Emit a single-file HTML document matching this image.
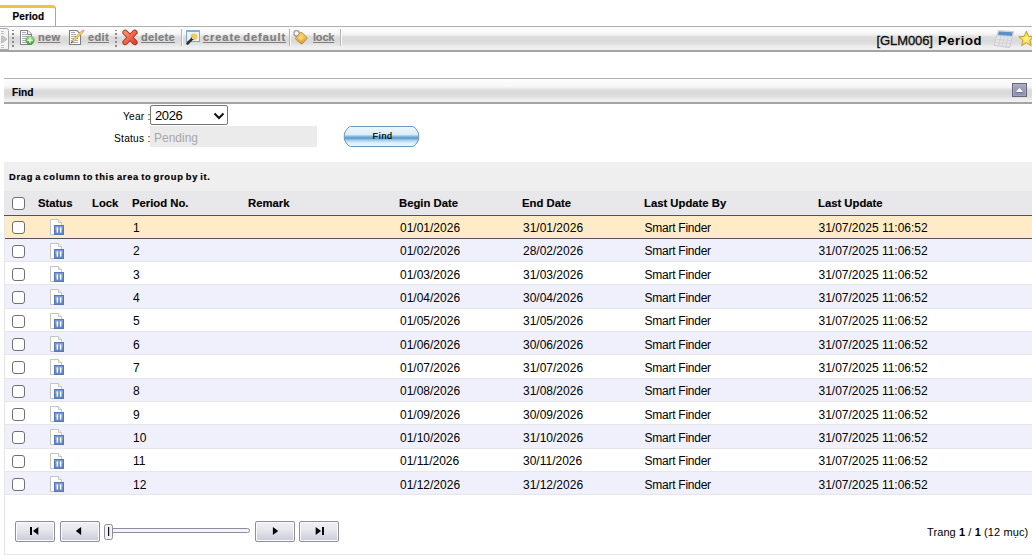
<!DOCTYPE html>
<html><head><meta charset="utf-8">
<style>
*{margin:0;padding:0;box-sizing:border-box}
html,body{width:1032px;height:559px;overflow:hidden;background:#fff;font-family:"Liberation Sans",sans-serif;color:#000;position:relative}
.a{position:absolute;white-space:nowrap}
.tab{left:0;top:5px;width:56px;height:22px;border-top:3px solid #f4be4c;border-right:1px solid #a4a8ac;border-top-right-radius:4px;background:#fff}
.tb{left:0;top:26px;width:1032px;height:26px;border-top:1px solid #b0b0b0;border-bottom:2px solid #a4a4a4;background:linear-gradient(#fdfdfd 0px,#f8f8f8 6px,#eeeeee 8px,#dcdcdc 10px,#dadada 14px,#e0e0e0 17px,#ececec 19px,#f2f2f2 23px)}
.lnk{font-size:11px;font-weight:bold;color:#7e7e7e;-webkit-text-stroke:0.2px #7e7e7e;text-decoration:underline;text-decoration-thickness:1px;text-underline-offset:1px}
.hdr{left:4px;top:78px;width:1028px;height:26px;border-top:1px solid #b0b0b0;border-bottom:2px solid #a4a4a4;background:linear-gradient(#fdfdfd 0px,#f8f8f8 7px,#eeeeee 9px,#dcdcdc 11px,#dadada 15px,#e0e0e0 18px,#ececec 20px,#f2f2f2 23px)}
.grp{left:4px;top:162px;width:1028px;height:29px;background:#efefef}
.gh{left:4px;top:191px;width:1028px;height:25px;background:#e8e8ea;border-bottom:1px solid #555060}
.gh:after{content:"";position:absolute;left:0;right:0;bottom:0;height:1px;background:#eaeaf6}
.row{position:absolute;left:4px;width:1028px;background:#fff;border-bottom:1px solid #e6e6e6}
.row.alt{background:#f0f0fc}
.row.sel{background:#ffecc6;border-bottom:1px solid #555060}
.cb{position:absolute;left:8px;width:13px;height:13px;border:1px solid #707070;border-radius:3px;background:#fff}
.c{position:absolute;font-size:12px;white-space:nowrap;top:5px}
.hl{position:absolute;font-size:11.3px;font-weight:bold;white-space:nowrap;top:6px;-webkit-text-stroke:0.15px #000}
.pb{position:absolute;top:521px;height:21px;border:1px solid #8e8e98;border-radius:2px;box-shadow:inset 0 0 0 1px #fafafc;background:linear-gradient(#f2f2f6,#e4e4ec 45%,#cbcbd9)}
</style></head><body>

<div class="a tab"></div>
<div class="a" style="left:12.5px;top:10.5px;font-size:10px;font-weight:bold;letter-spacing:0.1px;-webkit-text-stroke:0.2px #000">Period</div>

<div class="a tb"></div>
<svg class="a" style="left:0;top:0" width="1032" height="56" viewBox="0 0 1032 56">
 <defs>
  <linearGradient id="gg" x1="0" y1="0" x2="0" y2="1"><stop offset="0" stop-color="#b4e6a0"/><stop offset="0.5" stop-color="#6cc054"/><stop offset="1" stop-color="#3e9a30"/></linearGradient>
  <linearGradient id="lk" x1="0" y1="0" x2="1" y2="1"><stop offset="0" stop-color="#f6dc78"/><stop offset="1" stop-color="#d49a30"/></linearGradient>
  <radialGradient id="stg" cx="0.5" cy="0.55" r="0.6"><stop offset="0" stop-color="#fff6a0"/><stop offset="0.6" stop-color="#f6d838"/><stop offset="1" stop-color="#e8b820"/></radialGradient>
  <linearGradient id="xg" x1="0" y1="0" x2="1" y2="1"><stop offset="0" stop-color="#ff8a6a"/><stop offset="1" stop-color="#e8402a"/></linearGradient>
  <linearGradient id="calc" x1="0" y1="0" x2="0" y2="1"><stop offset="0" stop-color="#f2f2f2"/><stop offset="1" stop-color="#c8c8cc"/></linearGradient>
 </defs>
 <!-- handle -->
 <path d="M0 28.5 H6.5 Q8.5 28.5 8.5 30.5 V49.5 H0" fill="#f4f4f4" stroke="#a8a8a8" stroke-width="1"/>
 <g fill="#c0c0c0"><rect x="1" y="31" width="3" height="1"/><rect x="1" y="33" width="3" height="1"/><rect x="1" y="45" width="3" height="1"/><rect x="1" y="47" width="3" height="1"/><rect x="1" y="36" width="1" height="7"/></g>
 <path d="M2.5 35.5 L7 39.3 L2.5 43 Z" fill="#c4c4c4" stroke="#b0b0b0" stroke-width="0.6"/>
 <!-- dots -->
 <g fill="#8a8a8a"><rect x="12" y="30" width="2" height="1"/><rect x="12" y="33" width="2" height="2"/><rect x="12" y="37" width="2" height="2"/><rect x="12" y="41" width="2" height="2"/><rect x="12" y="45" width="2" height="2"/></g>
 <g fill="#8a8a8a"><rect x="115" y="30" width="2" height="1"/><rect x="115" y="33" width="2" height="2"/><rect x="115" y="37" width="2" height="2"/><rect x="115" y="41" width="2" height="2"/><rect x="115" y="45" width="2" height="2"/></g>
 <!-- new icon -->
 <path d="M20.5 30.5 H28 L31.5 34 V44.5 H20.5 Z" fill="#fff" stroke="#7e7e86" stroke-width="1"/>
 <path d="M27.5 30.5 V34.5 H31.5" fill="#f4f4f4" stroke="#7e7e86" stroke-width="1"/>
 <g fill="#a8aab8"><rect x="22" y="32" width="4" height="1"/><rect x="22" y="34" width="5" height="1"/><rect x="22" y="36" width="7" height="1"/><rect x="22" y="38" width="7" height="1"/><rect x="22" y="40" width="7" height="1"/><rect x="22" y="42" width="7" height="1"/></g>
 <circle cx="30" cy="40.3" r="4.2" fill="url(#gg)" stroke="#4a9a3a" stroke-width="0.6"/>
 <path d="M30 37.6 V43 M27.3 40.3 H32.7" stroke="#e8f8e0" stroke-width="1.4"/>
 <!-- edit icon -->
 <path d="M69.5 30.5 H77 L80.5 34 V44.5 H69.5 Z" fill="#fff" stroke="#7e7e86" stroke-width="1.1"/>
 <g fill="#a8aab8"><rect x="71" y="32" width="4" height="1"/><rect x="71" y="34" width="5" height="1"/><rect x="71" y="36" width="7" height="1"/><rect x="71" y="38" width="7" height="1"/><rect x="71" y="40" width="7" height="1"/><rect x="71" y="42" width="7" height="1"/></g>
 <path d="M72.3 41.7 L82.6 31.4" stroke="#b89038" stroke-width="2.6" stroke-linecap="butt"/>
 <path d="M72.3 41.7 L82.6 31.4" stroke="#f4d868" stroke-width="1.5"/>
 <path d="M82.2 31.8 L84 30" stroke="#e8a898" stroke-width="2.2"/>
 <path d="M71 43 L72.6 41.4" stroke="#555" stroke-width="1.2"/>
 <!-- delete -->
 <path d="M125.2 32.4 L134.8 42.4 M134.8 32.4 L125.2 42.4" stroke="#9a3424" stroke-width="5.6" stroke-linecap="round"/>
 <path d="M125.2 32.4 L134.8 42.4 M134.8 32.4 L125.2 42.4" stroke="url(#xg)" stroke-width="3.8" stroke-linecap="round"/>
 <!-- separators -->
 <rect x="181" y="29" width="1" height="17" fill="#b4b4b4"/><rect x="182" y="29" width="1" height="17" fill="#fafafa"/>
 <rect x="289" y="29" width="1" height="17" fill="#b4b4b4"/><rect x="290" y="29" width="1" height="17" fill="#fafafa"/>
 <rect x="340" y="29" width="1" height="17" fill="#b4b4b4"/><rect x="341" y="29" width="1" height="17" fill="#fafafa"/>
 <!-- create default -->
 <rect x="186.5" y="30.5" width="13" height="11" fill="#eaf2fc" stroke="#7ea4d8" stroke-width="1"/>
 <rect x="186" y="30" width="14" height="2" fill="#86acdc"/>
 <circle cx="194" cy="36.8" r="3.4" fill="#f0d050"/>
 <path d="M187.5 43.5 L192.8 38.2" stroke="#2e2e2e" stroke-width="2.6" stroke-linecap="round"/>
 <circle cx="193" cy="38" r="1" fill="#fff"/>
 <!-- lock -->
 <circle cx="296.6" cy="33.4" r="2.7" fill="none" stroke="#9a9cb0" stroke-width="1.3"/>
 <rect x="296.8" y="33.7" width="9" height="9" rx="1.6" transform="rotate(42 301.3 38.2)" fill="url(#lk)" stroke="#c08a30" stroke-width="0.9"/>
 <rect x="299" y="36" width="4" height="4" transform="rotate(42 301 38)" fill="#f8e488" opacity="0.6"/>
 <!-- calculator -->
 <path d="M998.3 30.6 L1013.6 31.6 L1009.7 47.7 L994 45.3 Z" fill="#e4e4e8" stroke="#c4c4cc" stroke-width="0.8"/>
 <path d="M998.8 31.4 L1012.8 32.3 L1011.8 36 L998 35.2 Z" fill="#5e8ec4"/>
 <path d="M998 35.2 L1011.8 36 L1011.5 37 L997.8 36.2 Z" fill="#b4d6ee"/>
 <g stroke="#c8c8d0" stroke-width="0.7"><path d="M997.2 39.6 L1010.8 40.4 M996.3 42.6 L1010 43.4"/><path d="M1001 36.5 L998.5 46 M1004.5 36.7 L1002.2 46.5 M1008 36.9 L1005.9 47"/></g>
 <!-- star -->
 <path d="M1026.4 31 L1028.6 36.3 L1034 36.7 L1029.9 40.2 L1031.2 45.6 L1026.4 42.7 L1021.6 45.6 L1022.9 40.2 L1018.8 36.7 L1024.2 36.3 Z" fill="url(#stg)" stroke="#c09a28" stroke-width="0.9" stroke-linejoin="round"/>
</svg>
<div class="a lnk" style="left:38px;top:31px;letter-spacing:0.3px">new</div>
<div class="a lnk" style="left:88px;top:31px;letter-spacing:0.35px">edit</div>
<div class="a lnk" style="left:141px;top:31px;letter-spacing:0.37px">delete</div>
<div class="a lnk" style="left:203px;top:31px;letter-spacing:0.95px;word-spacing:-1.8px">create default</div>
<div class="a lnk" style="left:313px;top:31px;letter-spacing:-0.2px">lock</div>
<div class="a" style="left:876.5px;top:33px;font-size:13px;letter-spacing:-0.1px;color:#111;-webkit-text-stroke:0.35px #111">[GLM006]</div>
<div class="a" style="left:938px;top:33px;font-size:13px;font-weight:bold;letter-spacing:0.6px;color:#000">Period</div>

<div class="a hdr"></div>
<div class="a" style="left:12px;top:87px;font-size:10.2px;font-weight:bold;-webkit-text-stroke:0.15px #000">Find</div>
<svg class="a" style="left:1008px;top:80px" width="24" height="20" viewBox="1008 80 24 20">
 <defs><linearGradient id="cg" x1="0" y1="0" x2="0" y2="1"><stop offset="0" stop-color="#acacc4"/><stop offset="1" stop-color="#8a8aac"/></linearGradient></defs>
 <rect x="1012.5" y="83.5" width="14" height="13" fill="url(#cg)" stroke="#66667a"/>
 <rect x="1013.5" y="84.5" width="12" height="11" fill="none" stroke="#b2b2ca" stroke-width="0.8" opacity="0.7"/>
 <path d="M1015.9 92 L1019.5 88 L1023.1 92 Z" fill="#fff"/>
 <rect x="1016" y="92" width="7" height="1" fill="#74748e"/>
</svg>

<div class="a" style="left:123px;top:111px;font-size:10.2px;letter-spacing:0.2px">Year :</div>
<div class="a" style="left:150px;top:105px;width:78px;height:20px;border:1px solid #767676;border-radius:2px;background:#fff"></div>
<div class="a" style="left:155px;top:108px;font-size:13px;letter-spacing:-0.4px">2026</div>
<svg class="a" style="left:0;top:100px" width="430" height="52" viewBox="0 100 430 52">
 <defs><linearGradient id="fb" x1="0" y1="0" x2="0" y2="1"><stop offset="0" stop-color="#eef8fe"/><stop offset="0.4" stop-color="#dcedf8"/><stop offset="0.5" stop-color="#86b8dc"/><stop offset="0.58" stop-color="#5a98c6"/><stop offset="0.68" stop-color="#a4cce8"/><stop offset="0.82" stop-color="#def0fa"/><stop offset="1" stop-color="#eaf6fe"/></linearGradient></defs>
 <path d="M214.5 113.5 L219 118 L223.5 113.5" fill="none" stroke="#111" stroke-width="2"/>
 <path d="M350.5 126.5 L412.5 126.5 Q415 126.5 418.5 133 Q419 136.5 418.5 140 Q415 146.5 412.5 146.5 L350.5 146.5 Q348 146.5 344.5 140 Q344 136.5 344.5 133 Q348 126.5 350.5 126.5 Z" fill="url(#fb)" stroke="#6a98c0" stroke-width="1"/>
</svg>
<div class="a" style="left:372.5px;top:130.5px;font-size:9px;letter-spacing:0.7px;color:#000;-webkit-text-stroke:0.2px #000">Find</div>
<div class="a" style="left:114px;top:133px;font-size:10.2px;letter-spacing:0.25px">Status :</div>
<div class="a" style="left:150px;top:126px;width:167px;height:21px;background:#ebebeb"></div>
<div class="a" style="left:154px;top:131px;font-size:12px;color:#a8a8a8">Pending</div>

<div class="a grp"></div>
<div class="a" style="left:9px;top:171.5px;font-size:9.3px;font-weight:bold;letter-spacing:0.72px;word-spacing:-1.1px;-webkit-text-stroke:0.2px #000">Drag a column to this area to group by it.</div>
<div class="a gh"><div class="cb" style="top:6px"></div><div class="hl" style="left:34px">Status</div><div class="hl" style="left:88px">Lock</div><div class="hl" style="left:128px">Period No.</div><div class="hl" style="left:244px">Remark</div><div class="hl" style="left:395px">Begin Date</div><div class="hl" style="left:518px">End Date</div><div class="hl" style="left:640px">Last Update By</div><div class="hl" style="left:814px">Last Update</div></div>

<div class="row sel" style="top:216px;height:23px"><div class="cb" style="top:5px"></div><svg class="st" width="16" height="17" viewBox="0 0 16 17" style="position:absolute;left:46px;top:3px">
<path d="M0.5 0.5 H8.5 L11.5 3.5 V15.5 H0.5 Z" fill="#fff" stroke="#c4c4c4"/>
<path d="M8.5 0.5 V3.5 H11.5" fill="#f0f0f0" stroke="#c8c8c8"/>
<rect x="4" y="6" width="10" height="10" fill="#6688c8"/>
<rect x="5" y="7" width="8" height="4" fill="#7a9ad4"/>
<rect x="4.5" y="6.5" width="9" height="9" fill="none" stroke="#5478b8" stroke-width="1"/>
<rect x="6.6" y="8.4" width="1.5" height="5.2" fill="#fff"/><rect x="9.9" y="8.4" width="1.5" height="5.2" fill="#fff"/>
</svg><div class="c" style="left:129px;top:5px">1</div><div class="c" style="left:396px;top:5px">01/01/2026</div><div class="c" style="left:519px;top:5px">31/01/2026</div><div class="c" style="left:640.5px;top:5px;letter-spacing:-0.25px">Smart Finder</div><div class="c" style="left:814.5px;top:5px">31/07/2025 11:06:52</div></div>
<div class="row alt" style="top:239px;height:23px"><div class="cb" style="top:6px"></div><svg class="st" width="16" height="17" viewBox="0 0 16 17" style="position:absolute;left:46px;top:4px">
<path d="M0.5 0.5 H8.5 L11.5 3.5 V15.5 H0.5 Z" fill="#fff" stroke="#c4c4c4"/>
<path d="M8.5 0.5 V3.5 H11.5" fill="#f0f0f0" stroke="#c8c8c8"/>
<rect x="4" y="6" width="10" height="10" fill="#6688c8"/>
<rect x="5" y="7" width="8" height="4" fill="#7a9ad4"/>
<rect x="4.5" y="6.5" width="9" height="9" fill="none" stroke="#5478b8" stroke-width="1"/>
<rect x="6.6" y="8.4" width="1.5" height="5.2" fill="#fff"/><rect x="9.9" y="8.4" width="1.5" height="5.2" fill="#fff"/>
</svg><div class="c" style="left:129px;top:5px">2</div><div class="c" style="left:396px;top:5px">01/02/2026</div><div class="c" style="left:519px;top:5px">28/02/2026</div><div class="c" style="left:640.5px;top:5px;letter-spacing:-0.25px">Smart Finder</div><div class="c" style="left:814.5px;top:5px">31/07/2025 11:06:52</div></div>
<div class="row" style="top:262px;height:23px"><div class="cb" style="top:6px"></div><svg class="st" width="16" height="17" viewBox="0 0 16 17" style="position:absolute;left:46px;top:4px">
<path d="M0.5 0.5 H8.5 L11.5 3.5 V15.5 H0.5 Z" fill="#fff" stroke="#c4c4c4"/>
<path d="M8.5 0.5 V3.5 H11.5" fill="#f0f0f0" stroke="#c8c8c8"/>
<rect x="4" y="6" width="10" height="10" fill="#6688c8"/>
<rect x="5" y="7" width="8" height="4" fill="#7a9ad4"/>
<rect x="4.5" y="6.5" width="9" height="9" fill="none" stroke="#5478b8" stroke-width="1"/>
<rect x="6.6" y="8.4" width="1.5" height="5.2" fill="#fff"/><rect x="9.9" y="8.4" width="1.5" height="5.2" fill="#fff"/>
</svg><div class="c" style="left:129px;top:6px">3</div><div class="c" style="left:396px;top:6px">01/03/2026</div><div class="c" style="left:519px;top:6px">31/03/2026</div><div class="c" style="left:640.5px;top:6px;letter-spacing:-0.25px">Smart Finder</div><div class="c" style="left:814.5px;top:6px">31/07/2025 11:06:52</div></div>
<div class="row alt" style="top:285px;height:24px"><div class="cb" style="top:6px"></div><svg class="st" width="16" height="17" viewBox="0 0 16 17" style="position:absolute;left:46px;top:4px">
<path d="M0.5 0.5 H8.5 L11.5 3.5 V15.5 H0.5 Z" fill="#fff" stroke="#c4c4c4"/>
<path d="M8.5 0.5 V3.5 H11.5" fill="#f0f0f0" stroke="#c8c8c8"/>
<rect x="4" y="6" width="10" height="10" fill="#6688c8"/>
<rect x="5" y="7" width="8" height="4" fill="#7a9ad4"/>
<rect x="4.5" y="6.5" width="9" height="9" fill="none" stroke="#5478b8" stroke-width="1"/>
<rect x="6.6" y="8.4" width="1.5" height="5.2" fill="#fff"/><rect x="9.9" y="8.4" width="1.5" height="5.2" fill="#fff"/>
</svg><div class="c" style="left:129px;top:6px">4</div><div class="c" style="left:396px;top:6px">01/04/2026</div><div class="c" style="left:519px;top:6px">30/04/2026</div><div class="c" style="left:640.5px;top:6px;letter-spacing:-0.25px">Smart Finder</div><div class="c" style="left:814.5px;top:6px">31/07/2025 11:06:52</div></div>
<div class="row" style="top:309px;height:23px"><div class="cb" style="top:6px"></div><svg class="st" width="16" height="17" viewBox="0 0 16 17" style="position:absolute;left:46px;top:4px">
<path d="M0.5 0.5 H8.5 L11.5 3.5 V15.5 H0.5 Z" fill="#fff" stroke="#c4c4c4"/>
<path d="M8.5 0.5 V3.5 H11.5" fill="#f0f0f0" stroke="#c8c8c8"/>
<rect x="4" y="6" width="10" height="10" fill="#6688c8"/>
<rect x="5" y="7" width="8" height="4" fill="#7a9ad4"/>
<rect x="4.5" y="6.5" width="9" height="9" fill="none" stroke="#5478b8" stroke-width="1"/>
<rect x="6.6" y="8.4" width="1.5" height="5.2" fill="#fff"/><rect x="9.9" y="8.4" width="1.5" height="5.2" fill="#fff"/>
</svg><div class="c" style="left:129px;top:5px">5</div><div class="c" style="left:396px;top:5px">01/05/2026</div><div class="c" style="left:519px;top:5px">31/05/2026</div><div class="c" style="left:640.5px;top:5px;letter-spacing:-0.25px">Smart Finder</div><div class="c" style="left:814.5px;top:5px">31/07/2025 11:06:52</div></div>
<div class="row alt" style="top:332px;height:23px"><div class="cb" style="top:6px"></div><svg class="st" width="16" height="17" viewBox="0 0 16 17" style="position:absolute;left:46px;top:4px">
<path d="M0.5 0.5 H8.5 L11.5 3.5 V15.5 H0.5 Z" fill="#fff" stroke="#c4c4c4"/>
<path d="M8.5 0.5 V3.5 H11.5" fill="#f0f0f0" stroke="#c8c8c8"/>
<rect x="4" y="6" width="10" height="10" fill="#6688c8"/>
<rect x="5" y="7" width="8" height="4" fill="#7a9ad4"/>
<rect x="4.5" y="6.5" width="9" height="9" fill="none" stroke="#5478b8" stroke-width="1"/>
<rect x="6.6" y="8.4" width="1.5" height="5.2" fill="#fff"/><rect x="9.9" y="8.4" width="1.5" height="5.2" fill="#fff"/>
</svg><div class="c" style="left:129px;top:6px">6</div><div class="c" style="left:396px;top:6px">01/06/2026</div><div class="c" style="left:519px;top:6px">30/06/2026</div><div class="c" style="left:640.5px;top:6px;letter-spacing:-0.25px">Smart Finder</div><div class="c" style="left:814.5px;top:6px">31/07/2025 11:06:52</div></div>
<div class="row" style="top:355px;height:24px"><div class="cb" style="top:6px"></div><svg class="st" width="16" height="17" viewBox="0 0 16 17" style="position:absolute;left:46px;top:4px">
<path d="M0.5 0.5 H8.5 L11.5 3.5 V15.5 H0.5 Z" fill="#fff" stroke="#c4c4c4"/>
<path d="M8.5 0.5 V3.5 H11.5" fill="#f0f0f0" stroke="#c8c8c8"/>
<rect x="4" y="6" width="10" height="10" fill="#6688c8"/>
<rect x="5" y="7" width="8" height="4" fill="#7a9ad4"/>
<rect x="4.5" y="6.5" width="9" height="9" fill="none" stroke="#5478b8" stroke-width="1"/>
<rect x="6.6" y="8.4" width="1.5" height="5.2" fill="#fff"/><rect x="9.9" y="8.4" width="1.5" height="5.2" fill="#fff"/>
</svg><div class="c" style="left:129px;top:6px">7</div><div class="c" style="left:396px;top:6px">01/07/2026</div><div class="c" style="left:519px;top:6px">31/07/2026</div><div class="c" style="left:640.5px;top:6px;letter-spacing:-0.25px">Smart Finder</div><div class="c" style="left:814.5px;top:6px">31/07/2025 11:06:52</div></div>
<div class="row alt" style="top:379px;height:23px"><div class="cb" style="top:6px"></div><svg class="st" width="16" height="17" viewBox="0 0 16 17" style="position:absolute;left:46px;top:4px">
<path d="M0.5 0.5 H8.5 L11.5 3.5 V15.5 H0.5 Z" fill="#fff" stroke="#c4c4c4"/>
<path d="M8.5 0.5 V3.5 H11.5" fill="#f0f0f0" stroke="#c8c8c8"/>
<rect x="4" y="6" width="10" height="10" fill="#6688c8"/>
<rect x="5" y="7" width="8" height="4" fill="#7a9ad4"/>
<rect x="4.5" y="6.5" width="9" height="9" fill="none" stroke="#5478b8" stroke-width="1"/>
<rect x="6.6" y="8.4" width="1.5" height="5.2" fill="#fff"/><rect x="9.9" y="8.4" width="1.5" height="5.2" fill="#fff"/>
</svg><div class="c" style="left:129px;top:5px">8</div><div class="c" style="left:396px;top:5px">01/08/2026</div><div class="c" style="left:519px;top:5px">31/08/2026</div><div class="c" style="left:640.5px;top:5px;letter-spacing:-0.25px">Smart Finder</div><div class="c" style="left:814.5px;top:5px">31/07/2025 11:06:52</div></div>
<div class="row" style="top:402px;height:23px"><div class="cb" style="top:6px"></div><svg class="st" width="16" height="17" viewBox="0 0 16 17" style="position:absolute;left:46px;top:4px">
<path d="M0.5 0.5 H8.5 L11.5 3.5 V15.5 H0.5 Z" fill="#fff" stroke="#c4c4c4"/>
<path d="M8.5 0.5 V3.5 H11.5" fill="#f0f0f0" stroke="#c8c8c8"/>
<rect x="4" y="6" width="10" height="10" fill="#6688c8"/>
<rect x="5" y="7" width="8" height="4" fill="#7a9ad4"/>
<rect x="4.5" y="6.5" width="9" height="9" fill="none" stroke="#5478b8" stroke-width="1"/>
<rect x="6.6" y="8.4" width="1.5" height="5.2" fill="#fff"/><rect x="9.9" y="8.4" width="1.5" height="5.2" fill="#fff"/>
</svg><div class="c" style="left:129px;top:6px">9</div><div class="c" style="left:396px;top:6px">01/09/2026</div><div class="c" style="left:519px;top:6px">30/09/2026</div><div class="c" style="left:640.5px;top:6px;letter-spacing:-0.25px">Smart Finder</div><div class="c" style="left:814.5px;top:6px">31/07/2025 11:06:52</div></div>
<div class="row alt" style="top:425px;height:24px"><div class="cb" style="top:6px"></div><svg class="st" width="16" height="17" viewBox="0 0 16 17" style="position:absolute;left:46px;top:4px">
<path d="M0.5 0.5 H8.5 L11.5 3.5 V15.5 H0.5 Z" fill="#fff" stroke="#c4c4c4"/>
<path d="M8.5 0.5 V3.5 H11.5" fill="#f0f0f0" stroke="#c8c8c8"/>
<rect x="4" y="6" width="10" height="10" fill="#6688c8"/>
<rect x="5" y="7" width="8" height="4" fill="#7a9ad4"/>
<rect x="4.5" y="6.5" width="9" height="9" fill="none" stroke="#5478b8" stroke-width="1"/>
<rect x="6.6" y="8.4" width="1.5" height="5.2" fill="#fff"/><rect x="9.9" y="8.4" width="1.5" height="5.2" fill="#fff"/>
</svg><div class="c" style="left:129px;top:6px">10</div><div class="c" style="left:396px;top:6px">01/10/2026</div><div class="c" style="left:519px;top:6px">31/10/2026</div><div class="c" style="left:640.5px;top:6px;letter-spacing:-0.25px">Smart Finder</div><div class="c" style="left:814.5px;top:6px">31/07/2025 11:06:52</div></div>
<div class="row" style="top:449px;height:23px"><div class="cb" style="top:6px"></div><svg class="st" width="16" height="17" viewBox="0 0 16 17" style="position:absolute;left:46px;top:4px">
<path d="M0.5 0.5 H8.5 L11.5 3.5 V15.5 H0.5 Z" fill="#fff" stroke="#c4c4c4"/>
<path d="M8.5 0.5 V3.5 H11.5" fill="#f0f0f0" stroke="#c8c8c8"/>
<rect x="4" y="6" width="10" height="10" fill="#6688c8"/>
<rect x="5" y="7" width="8" height="4" fill="#7a9ad4"/>
<rect x="4.5" y="6.5" width="9" height="9" fill="none" stroke="#5478b8" stroke-width="1"/>
<rect x="6.6" y="8.4" width="1.5" height="5.2" fill="#fff"/><rect x="9.9" y="8.4" width="1.5" height="5.2" fill="#fff"/>
</svg><div class="c" style="left:129px;top:5px">11</div><div class="c" style="left:396px;top:5px">01/11/2026</div><div class="c" style="left:519px;top:5px">30/11/2026</div><div class="c" style="left:640.5px;top:5px;letter-spacing:-0.25px">Smart Finder</div><div class="c" style="left:814.5px;top:5px">31/07/2025 11:06:52</div></div>
<div class="row alt" style="top:472px;height:23px"><div class="cb" style="top:6px"></div><svg class="st" width="16" height="17" viewBox="0 0 16 17" style="position:absolute;left:46px;top:4px">
<path d="M0.5 0.5 H8.5 L11.5 3.5 V15.5 H0.5 Z" fill="#fff" stroke="#c4c4c4"/>
<path d="M8.5 0.5 V3.5 H11.5" fill="#f0f0f0" stroke="#c8c8c8"/>
<rect x="4" y="6" width="10" height="10" fill="#6688c8"/>
<rect x="5" y="7" width="8" height="4" fill="#7a9ad4"/>
<rect x="4.5" y="6.5" width="9" height="9" fill="none" stroke="#5478b8" stroke-width="1"/>
<rect x="6.6" y="8.4" width="1.5" height="5.2" fill="#fff"/><rect x="9.9" y="8.4" width="1.5" height="5.2" fill="#fff"/>
</svg><div class="c" style="left:129px;top:6px">12</div><div class="c" style="left:396px;top:6px">01/12/2026</div><div class="c" style="left:519px;top:6px">31/12/2026</div><div class="c" style="left:640.5px;top:6px;letter-spacing:-0.25px">Smart Finder</div><div class="c" style="left:814.5px;top:6px">31/07/2025 11:06:52</div></div>

<div class="a" style="left:4px;top:216px;width:1px;height:339px;background:#e6e6e6;z-index:2"></div>
<div class="a" style="left:4px;top:554px;width:1028px;height:1px;background:#e8e8e8"></div>

<div class="pb" style="left:15px;width:40px"></div>
<div class="pb" style="left:60px;width:40px"></div>
<div class="pb" style="left:255px;width:40px"></div>
<div class="pb" style="left:299px;width:40px"></div>
<svg class="a" style="left:0;top:516px" width="350" height="30" viewBox="0 516 350 30">
 <path d="M112 528.5 H247.5 Q249.5 528.5 249.5 530.5 Q249.5 532.5 247.5 532.5 H112" fill="#f4f4f8" stroke="#8c8c9c" stroke-width="1"/>
 <rect x="104.5" y="524.5" width="8" height="15" rx="2" fill="#f2f2f6" stroke="#8c8c9c" stroke-width="1"/>
 <rect x="108" y="527" width="1.2" height="9" fill="#111"/>
 <rect x="30" y="527" width="2" height="8" fill="#000"/>
 <path d="M33 531 L38.3 527 V535 Z" fill="#000"/>
 <path d="M75.8 531 L81.1 527 V535 Z" fill="#000"/>
 <path d="M278.2 531 L272.9 527 V535 Z" fill="#000"/>
 <path d="M321 531 L315.7 527 V535 Z" fill="#000"/><rect x="322" y="527" width="2" height="8" fill="#000"/>
</svg>
<div class="a" style="left:927px;top:526px;font-size:11px;letter-spacing:0.1px">Trang <b>1</b> / <b>1</b> (12 mục)</div>

</body></html>
